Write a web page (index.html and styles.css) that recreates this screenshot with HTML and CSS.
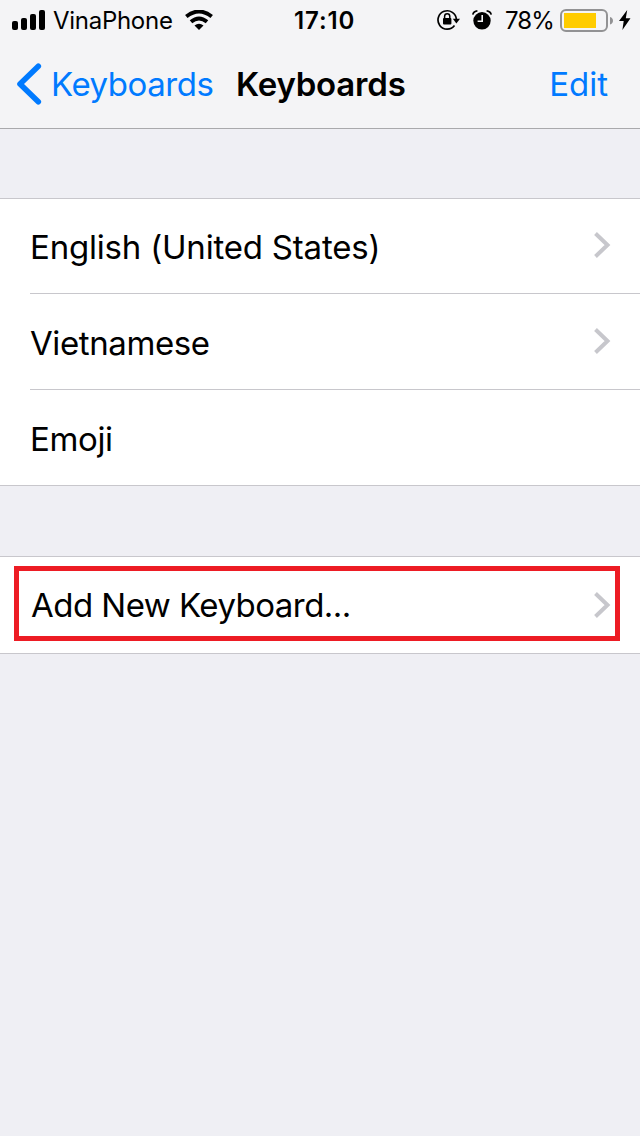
FILE: index.html
```html
<!DOCTYPE html>
<html lang="en">
<head>
<meta charset="utf-8">
<title>Keyboards</title>
<link rel="stylesheet" href="styles.css">
</head>
<body>
<header class="header">
  <div class="status">
    <svg class="signal" width="33" height="20" viewBox="0 0 33 20"><rect x="0" y="11" width="6" height="9" rx="2"/><rect x="9" y="8" width="6" height="12" rx="2"/><rect x="18" y="4" width="6" height="16" rx="2"/><rect x="27" y="0" width="6" height="20" rx="2"/></svg>
    <span class="carrier">VinaPhone</span>
    <svg class="wifi" width="28" height="20" viewBox="0 0 28 20"><path d="M1.3 6.600Q14-3.600 26.700 6.600M6 11.700q8-6.600 16 0" fill="none" stroke="#000" stroke-width="3.900"/><path d="M9.500 15.400q4.500-3.400 9 0L14 20z"/></svg>
    <span class="time">17:10</span>
    <svg class="lock" width="23" height="22" viewBox="0 0 23 22"><path d="M17.500 16.600A9.200 9.200 0 1 1 19.400 10.500" fill="none" stroke="#000" stroke-width="1.700"/><path d="M15.800 9.800h7.200l-3.600 4.600z"/><rect x="6" y="9" width="8.400" height="6.500" rx="1"/><path d="M7.600 10V7.400a2.600 2.600 0 0 1 5.200 0V10" fill="none" stroke="#000" stroke-width="1.500"/></svg>
    <svg class="alarm" width="20" height="20" viewBox="0 0 20 20"><circle cx="10" cy="10.800" r="8.700"/><path d="M.8 4.600Q1.600 1.200 5.400.9M14.600.9q3.800.3 4.600 3.700" fill="none" stroke="#000" stroke-width="1.700"/><path d="M10.200 5v6.200H5.600" fill="none" stroke="#f4f4f6" stroke-width="1.600"/></svg>
    <span class="percent">78%</span>
    <svg class="battery" width="53" height="24" viewBox="0 0 53 24"><rect x="1" y="1" width="46" height="21" rx="5" fill="none" stroke="#929294" stroke-width="2"/><rect x="4" y="4" width="32" height="15" fill="#fc0"/><path d="M50 8q3 1 3 3.700T50 15.500z" fill="#929294"/></svg>
    <svg class="bolt" width="12" height="20" viewBox="0 0 12 20"><path d="M8.200 0 0 11h4.700L3.400 20 11.500 8.200H6.800z"/></svg>
  </div>
  <nav class="nav">
    <svg class="back-icon" width="25" height="42" viewBox="0 0 25 42"><path d="M21.300 3.200 3 21l18.300 17.800" fill="none" stroke="#007aff" stroke-width="5.600" stroke-linecap="round" stroke-linejoin="round"/></svg>
    <span class="back">Keyboards</span>
    <h1 class="title">Keyboards</h1>
    <span class="edit">Edit</span>
  </nav>
</header>
<main class="settings">
  <ul class="group">
    <li class="row first"><span class="english">English (United States)</span><svg class="chevron" width="17" height="26" viewBox="0 0 17 26"><path d="M1.500 1.500 13.500 13 1.500 24.500"/></svg></li>
    <li class="row"><span class="vietnamese">Vietnamese</span><svg class="chevron" width="17" height="26" viewBox="0 0 17 26"><path d="M1.500 1.500 13.500 13 1.500 24.500"/></svg></li>
    <li class="row"><span class="emoji">Emoji</span></li>
  </ul>
  <div class="group action">
    <div class="highlight"><span class="add">Add New Keyboard...</span><svg class="chevron" width="17" height="26" viewBox="0 0 17 26"><path d="M1.500 1.500 13.500 13 1.500 24.500"/></svg></div>
  </div>
</main>
</body>
</html>
```

FILE: styles.css
```css
* { box-sizing: border-box; }
body {
  margin: 0;
  min-height: 1136px;
  background: #efeff4;
  color: #000;
  font: 33px/40px Inter, "Liberation Sans", sans-serif;
}
svg { display: block; flex: none; }
span, h1 { white-space: nowrap; }
.header { height: 129px; background: #f4f4f6; border-bottom: 1px solid #a9a9ac; }
.status { display: flex; align-items: center; height: 40px; padding-left: 12px; font-size: 24px; }
.status span { flex: none; padding-top: 2px; }
.carrier { width: 120px; margin-left: 8px; letter-spacing: -0.28px; }
.wifi { margin-left: 12px; }
.time { width: 62px; margin-left: 81px; font-weight: 600; letter-spacing: 0.9px; }
.lock { margin-left: 81px; }
.alarm { margin-left: 12px; }
.percent { width: 48px; margin-left: 13px; letter-spacing: -0.9px; }
.battery { margin: 2px 0 0 7px; }
.bolt { margin-left: 6px; }
.nav { display: flex; align-items: center; height: 88px; padding: 0 32px 0 17px; }
.back-icon { flex: none; }
.back { width: 162px; margin-left: 9px; color: #007aff; letter-spacing: -0.45px; }
.title { margin: 0 0 0 23px; font-size: 33px; font-weight: 600; letter-spacing: -0.2px; }
.edit { margin-left: auto; color: #007aff; }
.settings { padding-top: 69px; }
.group { margin: 0 0 70px; padding: 0; list-style: none; background: #fff; border-top: 1px solid #c8c7cc; border-bottom: 1px solid #c8c7cc; }
.row { display: flex; align-items: center; justify-content: space-between; height: 96px; margin-left: 30px; padding: 0 29px 0 0; border-bottom: 1px solid #c8c7cc; }
.row.first { height: 95px; }
.row:last-child { height: 95px; border-bottom: 0; }
.row span { padding-top: 2px; }
.english { letter-spacing: -0.2px; }
.vietnamese { letter-spacing: -0.4px; }
.emoji { letter-spacing: -0.35px; }
.add { letter-spacing: -0.53px; }
.chevron { fill: none; stroke: #c7c7cc; stroke-width: 4; }
.row .chevron { margin-bottom: 2px; }
.action { height: 98px; padding: 9px 20px 12px 14px; }
.highlight { display: flex; align-items: center; justify-content: space-between; height: 75px; padding: 2px 4px 0 12px; border: 5px solid #ed1c24; }
```
